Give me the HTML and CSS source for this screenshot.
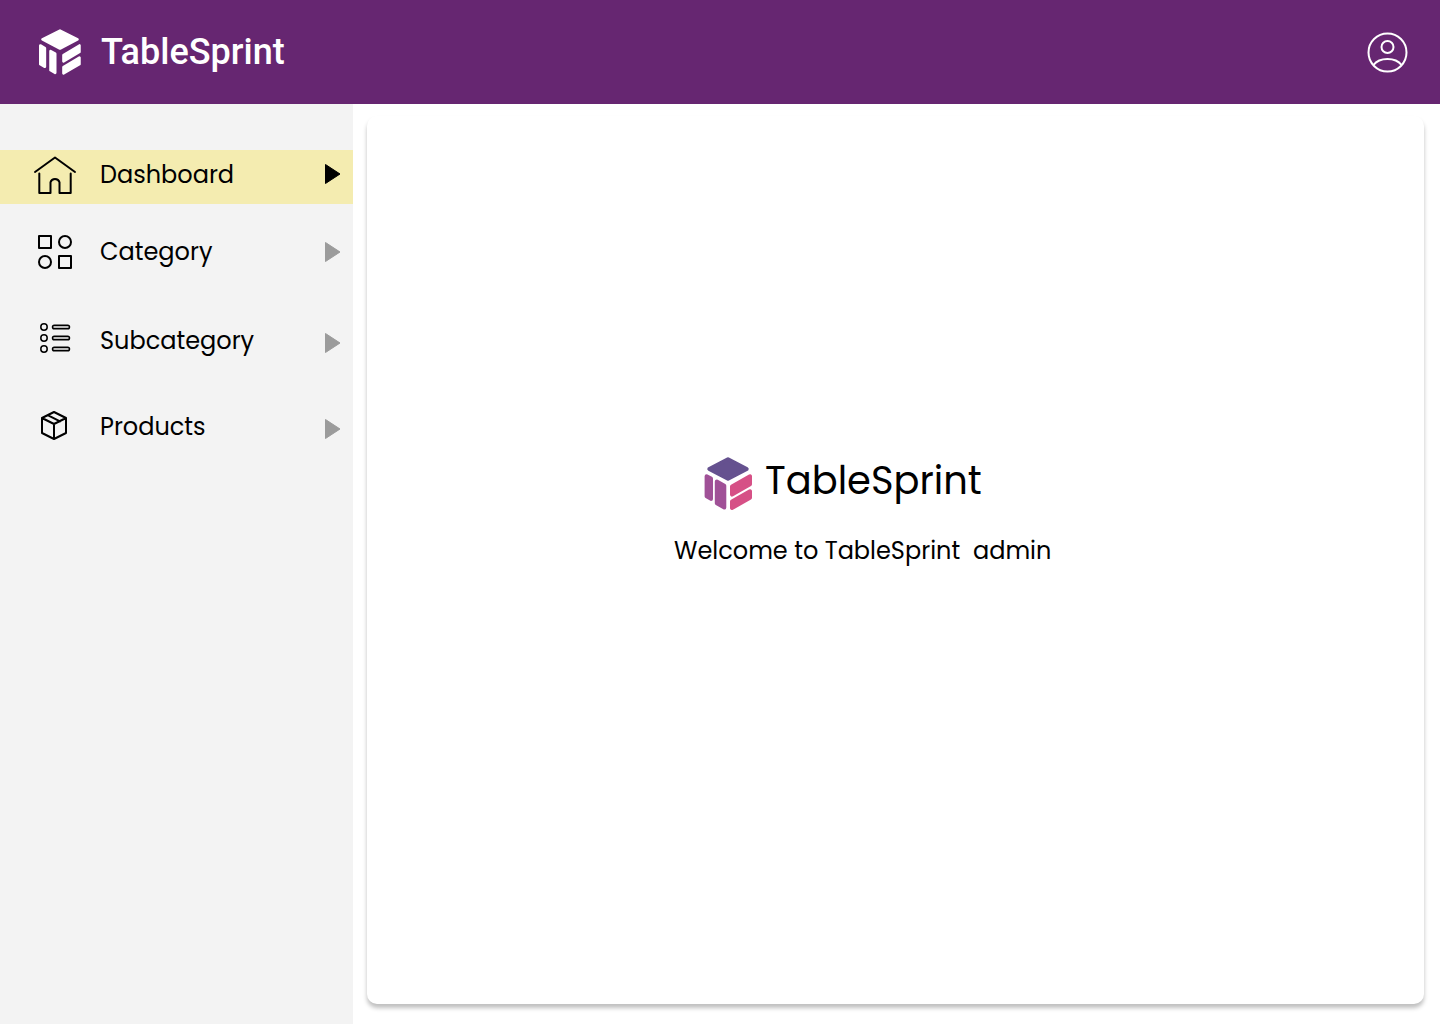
FILE: index.html
```html
<!DOCTYPE html>
<html lang="en">
<head>
<meta charset="utf-8">
<title>TableSprint</title>
<link rel="stylesheet" href="styles.css">
</head>
<body>
<header class="header">
  <svg class="brand-logo" viewBox="0 0 48 53" preserveAspectRatio="none">
    <g stroke-width="3" stroke-linejoin="round">
      <path d="M24 1.800 44 12 24 22.500 4 12Z"/>
      <path d="M1.500 19 6.700 22V43.500L1.500 40.500ZM13.200 25.500 18.500 28.500V50.500L13.200 47.500Z"/>
      <path d="M28 30 46.200 19V26.500L28 37.300ZM28 43.800 46.200 33V40.500L28 51Z"/>
    </g>
  </svg>
  <span class="brand-name">TableSprint</span>
  <svg class="avatar" viewBox="0 0 42 42">
    <circle cx="20.500" cy="20.500" r="19"/>
    <circle cx="20.500" cy="15" r="6"/>
    <path d="M6.500 33C12.500 25 28.500 25 34.500 33"/>
  </svg>
</header>
<div class="body">
  <nav class="sidebar">
    <a class="item active">
      <svg class="icon" viewBox="28 150 54 50"><path d="M35 172 55 157.500 75 172M39.300 173.500V193H50.500V182.300A4.700 4.700 0 0 1 59.500 182.300V193H70.700V173.500"/></svg>
      <span class="label">Dashboard</span>
      <svg class="arrow" viewBox="324 150 18 50"><path d="M325.500 164.500 340 174 325.500 183.500Z"/></svg>
    </a>
    <a class="item category">
      <svg class="icon" viewBox="28 225 54 54"><rect x="39" y="236" width="12" height="12"/><circle cx="65" cy="242" r="6"/><circle cx="45" cy="262" r="6"/><rect x="59" y="256" width="12" height="12"/></svg>
      <span class="label">Category</span>
      <svg class="arrow" viewBox="324 225 18 54"><path d="M325.500 242.500 340 252 325.500 261.500Z"/></svg>
    </a>
    <a class="item subcategory">
      <svg class="icon thin" viewBox="28 314 54 54"><circle cx="44" cy="327" r="3.200"/><circle cx="44" cy="338" r="3.200"/><circle cx="44" cy="349" r="3.200"/><g class="bars"><rect x="52.500" y="325.200" width="17" height="3.600" rx="1.800"/><rect x="52.500" y="336.200" width="17" height="3.600" rx="1.800"/><rect x="52.500" y="347.200" width="17" height="3.600" rx="1.800"/></g></svg>
      <span class="label">Subcategory</span>
      <svg class="arrow" viewBox="324 314 18 54"><path d="M325.500 333.500 340 343 325.500 352.500Z"/></svg>
    </a>
    <a class="item products">
      <svg class="icon" viewBox="28 400 54 54"><path d="M54 412 66 418V433L54 439 42 433V418ZM42 418 54 424 66 418M54 424V439M47.700 415.200 60 421.400"/></svg>
      <span class="label">Products</span>
      <svg class="arrow" viewBox="324 400 18 54"><path d="M325.500 419.500 340 429 325.500 438.500Z"/></svg>
    </a>
  </nav>
  <main class="card">
    <div class="hero">
      <svg class="hero-logo" viewBox="0 0 48 53">
        <g stroke-width="4" stroke-linejoin="round">
          <path class="top" d="M24 2.300 42.700 12 24 21.700 5.300 12Z"/>
          <path class="left" d="M2.600 19.300 7 21.600V41.900L2.600 39.300ZM12.800 24.500 20.300 28.800V50.500L12.800 46.300Z"/>
          <path class="right" d="M28 29.500 46 19.300V27.200L28 37.600ZM28 44.600 46 34.300V40.700L28 50.900Z"/>
        </g>
      </svg>
      <span class="hero-name">TableSprint</span>
    </div>
    <p class="welcome">Welcome to TableSprint&nbsp; admin</p>
  </main>
</div>
</body>
</html>
```
FILE: styles.css
```css
* { box-sizing: border-box; }
body {
  margin: 0;
  height: 1024px;
  display: flex;
  flex-direction: column;
  background: #fff;
  color: #000;
  font-family: Poppins, Inter, "Open Sans", sans-serif;
}
.header {
  height: 104px;
  flex: none;
  display: flex;
  align-items: center;
  padding: 0 32px 0 38.5px;
  background: #662671;
  color: #fff;
}
.brand-logo { width: 42px; height: 46px; fill: #fff; stroke: #fff; }
.brand-name {
  margin-left: 20.5px;
  font: 500 36px/42px Roboto, sans-serif;
}
.avatar {
  width: 42px;
  height: 42px;
  margin: 1px -1px 0 auto;
  fill: none;
  stroke: #fff;
  stroke-width: 2;
}
.body { flex: 1; display: flex; }
.sidebar { width: 353px; flex: none; padding-top: 46px; background: #f3f3f3; }
.item { display: flex; align-items: center; height: 54px; padding: 0 11px 0 28px; }
.active { padding-bottom: 4px; background: #f4ecb0; }
.category { margin-top: 21px; }
.subcategory { margin-top: 35px; }
.products { margin-top: 32px; }
.icon {
  width: 54px;
  height: 54px;
  fill: none;
  stroke: #000;
  stroke-width: 2;
  stroke-linejoin: round;
  stroke-linecap: round;
}
.active .icon, .active .arrow { height: 50px; }
.thin { stroke-width: 1.5; }
.bars { fill: #bbb; }
.label { margin-left: 18px; font-size: 24px; line-height: 36px; }
.arrow {
  width: 18px;
  height: 54px;
  margin-left: auto;
  fill: #9b9b9b;
  stroke: #9b9b9b;
  stroke-linejoin: round;
}
.active .arrow { fill: #000; stroke: #000; }
.card {
  flex: 1;
  margin: 12px 16px 20px 14px;
  padding-top: 341px;
  border-radius: 10px;
  background: #fff;
  box-shadow: 0 4px 4px rgba(0, 0, 0, 0.25);
}
.hero { display: flex; height: 53px; margin-left: 337px; }
.hero-logo { width: 48px; height: 53px; }
.top { fill: #65518f; stroke: #65518f; }
.left { fill: #a05197; stroke: #a05197; }
.right { fill: #d65086; stroke: #d65086; }
.hero-name { margin-left: 13px; font-size: 38.4px; line-height: 47px; }
.welcome { margin: 23px 0 0 307px; font-size: 24px; line-height: 36px; }
```
